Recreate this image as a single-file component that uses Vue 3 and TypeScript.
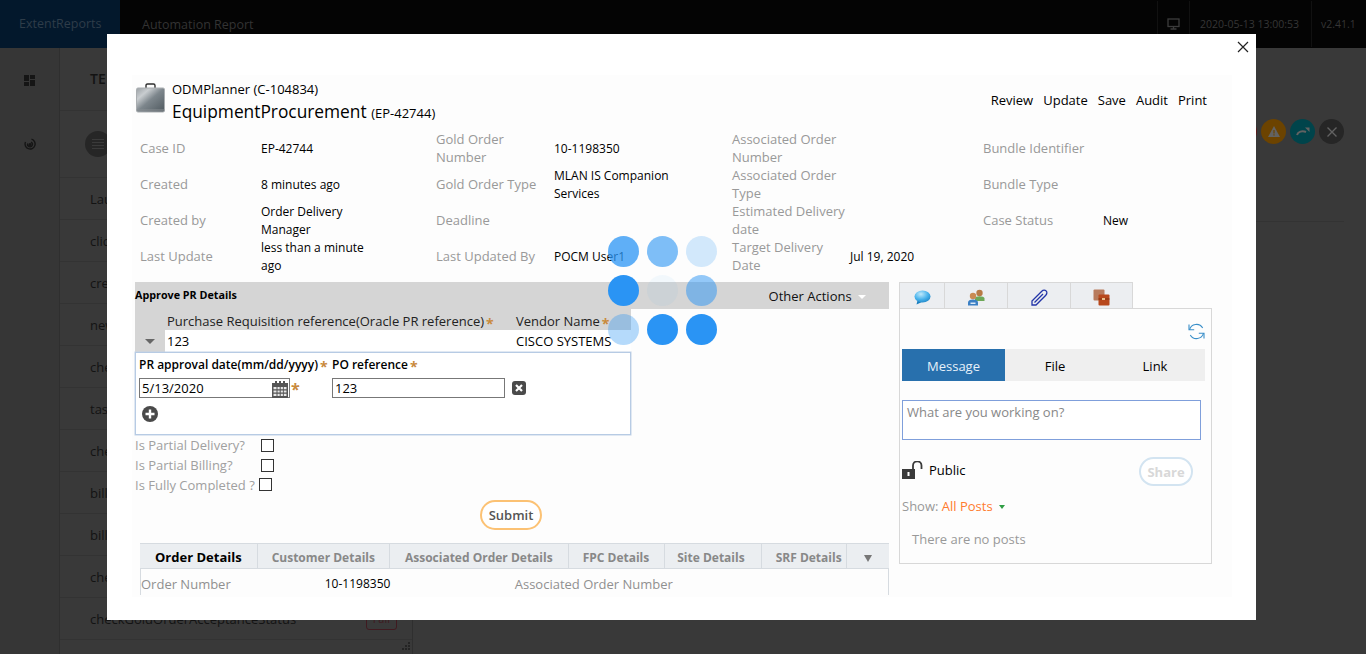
<script setup lang="ts">
interface InfoCell {
  label: string
  value?: string
}

const sideRows = ['clic', 'cre', 'new', 'che', 'tas', 'che', 'bill', 'bill', 'che']

const infoRows: InfoCell[][] = [
  [
    { label: 'Case ID', value: 'EP-42744' },
    { label: 'Gold Order Number', value: '10-1198350' },
    { label: 'Associated Order Number' },
    { label: 'Bundle Identifier' }
  ],
  [
    { label: 'Created', value: '8 minutes ago' },
    { label: 'Gold Order Type', value: 'MLAN IS Companion Services' },
    { label: 'Associated Order Type' },
    { label: 'Bundle Type' }
  ],
  [
    { label: 'Created by', value: 'Order Delivery Manager' },
    { label: 'Deadline' },
    { label: 'Estimated Delivery date' },
    { label: 'Case Status', value: 'New' }
  ],
  [
    { label: 'Last Update', value: 'less than a minute ago' },
    { label: 'Last Updated By', value: 'POCM User1' },
    { label: 'Target Delivery Date', value: 'Jul 19, 2020' },
    { label: '' }
  ]
]

const actions = ['Review', 'Update', 'Save', 'Audit', 'Print']
const checks = ['Is Partial Delivery?', 'Is Partial Billing?', 'Is Fully Completed ?']
const detailTabs = ['Customer Details', 'Associated Order Details', 'FPC Details', 'Site Details', 'SRF Details']
const spinnerDots = [0.75, 0.6, 0.2, 1, 0.05, 0.5, 0.35, 1, 1]
</script>

<template>
  <div class="page">
    <header class="topbar">
      <div class="brand">ExtentReports</div>
      <div class="report-name">Automation Report</div>
      <div class="top-cell top-icon">
        <svg width="13" height="12" viewBox="0 0 13 12" fill="none" stroke="#3c3c3c" stroke-width="1.3">
          <rect x="1" y="1" width="11" height="7.5" />
          <path d="M6.5 8.500v2.500M3.500 11h6" />
        </svg>
      </div>
      <div class="top-cell top-date">2020-05-13 13:00:53</div>
      <div class="top-cell top-version">v2.41.1</div>
    </header>

    <div class="backdrop-body">
      <aside class="sidebar">
        <div class="side-icon">
          <svg width="11" height="11" viewBox="0 0 11 11" fill="#151515">
            <path d="M0 0h5v6H0zM6 0h5v4H6zM6 5h5v6H6zM0 7h5v4H0z" />
          </svg>
        </div>
        <div class="side-icon">
          <svg width="12" height="12" viewBox="0 0 12 12" fill="none" stroke="#151515" stroke-width="1.4">
            <path d="M7.500 1.200A5 5 0 1 1 1.500 4" />
            <path d="M7 4.200A2.400 2.400 0 1 1 3.800 5.500" />
            <circle cx="6" cy="6.500" r="0.8" fill="#151515" />
          </svg>
        </div>
      </aside>
      <section class="test-list">
        <div class="list-head">TE</div>
        <div class="list-tools"><span class="tool-dot"></span></div>
        <div class="list-row">Lau</div>
        <div v-for="(row, i) in sideRows" :key="i" class="list-row">{{ row }}</div>
        <div class="list-row">
          checkGoldOrderAcceptanceStatus
          <span class="fail">Fail</span>
        </div>
        <svg class="grip" width="8" height="8" viewBox="0 0 8 8" fill="#242424">
          <path d="M6 0h2v2H6zM3 3h2v2H3zM6 3h2v2H6zM0 6h2v2H0zM3 6h2v2H3zM6 6h2v2H6z" />
        </svg>
      </section>
      <section class="test-detail">
        <div class="status-dots">
          <span class="status status--error"></span>
          <span class="status status--warn">
            <svg width="12" height="11" viewBox="0 0 12 11">
              <path d="M6 0l6 11H0z" fill="#626262" />
              <path d="M5.400 4h1.200v3.500H5.400zM5.400 8.300h1.200v1.200H5.400z" fill="#6c4300" />
            </svg>
          </span>
          <span class="status status--skip">
            <svg width="14" height="9" viewBox="0 0 14 9" fill="none" stroke="#626262" stroke-width="2">
              <path d="M1 8c1-3 5-5 9-3" />
              <path d="M9 0.500h4.500v4.500z" fill="#626262" stroke="none" />
            </svg>
          </span>
          <span class="status status--fail">
            <svg width="10" height="10" viewBox="0 0 10 10" stroke="#626262" stroke-width="1.4">
              <path d="M0.500 0.500l9 9M9.500 0.500l-9 9" />
            </svg>
          </span>
        </div>
        <div class="detail-rule"></div>
      </section>
    </div>

    <!-- modal sits over the dimmed report -->
    <div class="modal">
      <button class="modal-close" type="button" aria-label="Close">
        <svg width="12" height="12" viewBox="0 0 12 12" stroke="#222" stroke-width="1.2">
          <path d="M1 1l10 10M11 1L1 11" />
        </svg>
      </button>

      <div class="case-panel">
        <div class="case-head">
          <svg class="case-icon" width="29" height="30" viewBox="0 0 29 30">
            <defs>
              <linearGradient id="caseFill" x1="0" y1="0" x2="1" y2="1">
                <stop offset="0" stop-color="#9aa0a4" />
                <stop offset="0.25" stop-color="#c9cdd0" />
                <stop offset="0.5" stop-color="#7d868c" />
                <stop offset="1" stop-color="#4e585e" />
              </linearGradient>
            </defs>
            <path d="M10 5V2.500C10 1.500 10.700 1 11.500 1h6c.8 0 1.500.5 1.500 1.500V5" fill="none" stroke="#2e2e2e" stroke-width="1.4" />
            <rect x="0.500" y="5" width="28" height="24" rx="1.5" fill="url(#caseFill)" stroke="#a9adb0" />
            <path d="M0.500 27h28" stroke="#8b9094" />
          </svg>
          <div class="case-titles">
            <div class="case-parent">ODMPlanner (C-104834)</div>
            <div class="case-name">EquipmentProcurement <small>(EP-42744)</small></div>
          </div>
          <nav class="case-actions">
            <span v-for="action in actions" :key="action">{{ action }}</span>
          </nav>
        </div>

        <div class="info-grid">
          <template v-for="(row, r) in infoRows" :key="r">
            <template v-for="(cell, c) in row" :key="c">
              <div class="info-label">{{ cell.label }}</div>
              <div class="info-value">{{ cell.value }}</div>
            </template>
          </template>
        </div>

        <div class="work-area">
          <div class="work-main">
            <div class="action-bar">
              <strong>Approve PR Details</strong>
              <span class="other-actions">Other Actions <i class="caret-white"></i></span>
            </div>

            <div class="pr-head">
              <span class="pr-head-ref">Purchase Requisition reference(Oracle PR reference)<b class="req">*</b></span>
              <span>Vendor Name<b class="req">*</b></span>
            </div>
            <div class="pr-values">
              <span class="pr-toggle"><i class="caret-grey"></i></span>
              <span class="pr-value-ref">123</span>
              <span>CISCO SYSTEMS</span>
            </div>

            <div class="approval-box">
              <div class="approval-labels">
                <span class="approval-date-label">PR approval date(mm/dd/yyyy)<b class="req">*</b></span>
                <span>PO reference<b class="req">*</b></span>
              </div>
              <div class="approval-inputs">
                <div class="date-input">
                  5/13/2020
                  <svg class="calendar" width="16" height="17" viewBox="0 0 16 17">
                    <path d="M0 2h16v15H0z" fill="#555" />
                    <path d="M3 0h2v4H3zM7 0h2v4H7zM11 0h2v4h-2z" fill="#555" />
                    <path d="M1.500 6h3v2.200h-3zM5.500 6h2.200v2.200H5.500zM8.700 6h2.200v2.200H8.700zM11.800 6h2.700v2.200h-2.700zM1.500 9.400h3v2.200h-3zM5.500 9.400h2.200v2.200H5.500zM8.700 9.400h2.200v2.200H8.700zM11.800 9.400h2.700v2.200h-2.700zM1.500 12.800h3V15h-3zM5.500 12.800h2.200V15H5.500zM8.700 12.800h2.200V15H8.700zM11.800 12.800h2.700V15h-2.700z" fill="#e8e8e8" />
                  </svg>
                </div>
                <span class="date-req"><b class="req">*</b></span>
                <div class="po-input">123</div>
                <span class="remove-row">
                  <svg width="14" height="14" viewBox="0 0 14 14">
                    <rect width="14" height="14" rx="3" fill="#4a4a4a" />
                    <path d="M4 4l6 6M10 4l-6 6" stroke="#fff" stroke-width="2.2" />
                  </svg>
                </span>
              </div>
              <svg class="add-row" width="16" height="16" viewBox="0 0 16 16">
                <circle cx="8" cy="8" r="8" fill="#4a4a4a" />
                <path d="M8 3.500v9M3.500 8h9" stroke="#fff" stroke-width="2.4" />
              </svg>
            </div>

            <div class="check-list">
              <label v-for="(check, i) in checks" :key="check" class="check-row" :class="{ 'check-row--tight': i === 2 }">
                <span class="check-label">{{ check }}</span>
                <span class="check-box"></span>
              </label>
            </div>

            <div class="submit-wrap">
              <button class="submit" type="button">Submit</button>
            </div>

            <div class="details">
              <div class="detail-tabs">
                <span class="detail-tab detail-tab--active">Order Details</span>
                <span v-for="tab in detailTabs" :key="tab" class="detail-tab">{{ tab }}</span>
                <span class="detail-tab detail-tab--more"><i class="caret-more"></i></span>
              </div>
              <div class="detail-row">
                <span class="detail-label">Order Number</span>
                <span class="detail-value">10-1198350</span>
                <span class="detail-label">Associated Order Number</span>
              </div>
            </div>
          </div>

          <aside class="social">
            <div class="social-tabs">
              <span class="social-tab">
                <svg width="17" height="15" viewBox="0 0 17 15">
                  <defs>
                    <radialGradient id="bubbleFill" cx="0.4" cy="0.3" r="0.8">
                      <stop offset="0" stop-color="#bfe9fb" />
                      <stop offset="0.55" stop-color="#49b3ec" />
                      <stop offset="1" stop-color="#1a7fc0" />
                    </radialGradient>
                  </defs>
                  <path d="M3.500 10.500L2.500 14.500l5.500-2.500z" fill="#1a7fc0" />
                  <ellipse cx="8.500" cy="6.500" rx="8" ry="6" fill="url(#bubbleFill)" />
                </svg>
              </span>
              <span class="social-tab">
                <svg width="17" height="17" viewBox="0 0 17 17">
                  <circle cx="11.500" cy="4" r="3.200" fill="#b77a45" />
                  <path d="M7 12V9.500C7 8 9 7.300 11.500 7.300S16.500 8 16.500 9.500V12z" fill="#6da858" />
                  <circle cx="5" cy="7" r="3.200" fill="#c98a52" />
                  <path d="M0 16.500v-3C0 11.800 2 10.500 5 10.500s5 1.300 5 3v3z" fill="#3a7fc4" />
                  <path d="M2.500 13.500h5v1.500h-5z" fill="#dbe9f6" />
                </svg>
              </span>
              <span class="social-tab">
                <svg width="17" height="17" viewBox="0 0 17 17" fill="none" stroke="#2335a8" stroke-width="1.3">
                  <path d="M1 12L10.800 2.200c1.400-1.400 3.300-1.300 4.300-.3s1.100 2.900-.3 4.300L5 16H1z" />
                  <path d="M3.500 13.500L12 5" />
                </svg>
              </span>
              <span class="social-tab">
                <svg width="17" height="17" viewBox="0 0 17 17">
                  <rect x="0.500" y="0.500" width="11" height="11" rx="1" fill="#b87b5d" />
                  <rect x="5.500" y="5.500" width="11" height="11" rx="1" fill="#b8481c" />
                  <path d="M5.500 10h11" stroke="#7e300f" />
                  <rect x="9" y="9" width="3" height="2" fill="#e9c08b" />
                </svg>
              </span>
            </div>
            <div class="social-body">
              <div class="refresh-row">
                <svg width="17" height="17" viewBox="0 0 17 17" fill="none" stroke="#3a8fc9" stroke-width="1.1">
                  <path d="M1.500 6.800A7.200 7.200 0 0 1 14.700 5" />
                  <path d="M15.500 10.200A7.200 7.200 0 0 1 2.300 12" />
                  <path d="M1 1.500v5.300h5.200M16 15.500v-5.300h-5.200" />
                </svg>
              </div>
              <div class="post-tabs">
                <span class="post-tab post-tab--active">Message</span>
                <span class="post-tab">File</span>
                <span class="post-tab">Link</span>
              </div>
              <div class="post-input">What are you working on?</div>
              <div class="share-row">
                <svg width="21" height="18" viewBox="0 0 21 18">
                  <rect x="0" y="8" width="13" height="10" fill="#3a3a3a" />
                  <path d="M11 8V4.500a4 4 0 0 1 8.500 0V8" fill="none" stroke="#3a3a3a" stroke-width="1.8" />
                  <rect x="5.500" y="11" width="2" height="4" fill="#fff" />
                </svg>
                <span class="share-public">Public</span>
                <button class="share" type="button">Share</button>
              </div>
              <div class="show-row">
                <span>Show:</span> <span class="show-value">All Posts</span><i class="caret-green"></i>
              </div>
              <div class="no-posts">There are no posts</div>
            </div>
          </aside>
        </div>
      </div>
    </div>

    <!-- loading spinner on top of the modal -->
    <div class="spinner">
      <span
        v-for="(opacity, i) in spinnerDots"
        :key="i"
        class="spinner-dot"
        :style="{ opacity }"
      ></span>
    </div>
  </div>
</template>

<style scoped>
.page {
  position: relative;
  width: 1366px;
  height: 654px;
  overflow: hidden;
  background: #393939;
  font-family: "Open Sans", "Liberation Sans", sans-serif;
  font-size: 12px;
  color: #000;
}

/* dimmed report */
.topbar {
  display: flex;
  align-items: center;
  height: 48px;
  background: #040404;
  color: #333;
  font-size: 12.5px;
}

.brand {
  width: 120px;
  height: 48px;
  line-height: 48px;
  padding-left: 19px;
  box-sizing: border-box;
  background: #03182c;
  color: #2e3c49;
}

.report-name {
  flex: 1;
  padding-left: 22px;
}

.top-cell {
  display: flex;
  align-items: center;
  height: 46px;
  box-sizing: border-box;
  border-left: 1px solid #111;
  font-size: 10.5px;
  color: #363636;
}

.top-icon {
  justify-content: center;
  width: 32px;
}

.top-date {
  width: 122px;
  padding-left: 10px;
}

.top-version {
  width: 55px;
  padding-left: 9px;
}

.backdrop-body {
  display: flex;
  height: 606px;
}

.sidebar {
  width: 59px;
  border-right: 1px solid #2f2f2f;
  background: #363636;
}

.side-icon {
  display: flex;
  align-items: center;
  justify-content: center;
  height: 64px;
}

.test-list {
  position: relative;
  width: 352px;
  border-right: 1px solid #2f2f2f;
  color: #131313;
  font-size: 13px;
}

.list-head {
  height: 62px;
  line-height: 62px;
  padding-left: 30px;
  font-size: 14px;
  font-weight: 600;
  border-bottom: 1px solid #333;
}

.list-tools {
  display: flex;
  align-items: center;
  height: 66px;
  padding-left: 25px;
  border-bottom: 1px solid #333;
}

.tool-dot {
  width: 26px;
  height: 26px;
  border-radius: 50%;
  background: repeating-linear-gradient(#3a3a3a 0 1px, #262626 1px 3px) center / 12px 11px no-repeat, #262626;
}

.list-row {
  display: flex;
  justify-content: space-between;
  align-items: center;
  height: 41px;
  padding: 0 15px 0 30px;
  border-bottom: 1px solid #333;
}

.fail {
  padding: 3px 6px;
  border: 1px solid #401a20;
  border-radius: 3px;
  color: #401a20;
  font-size: 11px;
}

.grip {
  position: absolute;
  right: 2px;
  bottom: 4px;
}

.test-detail {
  flex: 1;
  padding: 71px 22px 0 0;
}

.status-dots {
  display: flex;
  justify-content: flex-end;
  gap: 4px;
}

.status {
  display: flex;
  align-items: center;
  justify-content: center;
  width: 25px;
  height: 25px;
  border-radius: 50%;
}

.status--error {
  background: #5c1a1a;
}

.status--warn {
  background: #6c4300;
}

.status--skip {
  background: #00444b;
}

.status--fail {
  background: #262626;
}

.detail-rule {
  height: 1px;
  margin-top: 77px;
  background: #333;
}

/* modal */
.modal {
  position: absolute;
  left: 107px;
  top: 34px;
  width: 1149px;
  height: 586px;
  background: #fff;
  overflow: hidden;
}

.modal-close {
  position: absolute;
  top: 7px;
  right: 7px;
  display: flex;
  padding: 0;
  border: 0;
  background: none;
}

.case-panel {
  width: 1100px;
  height: 522px;
  margin: 41px 0 0 25px;
  padding: 0 0 0 3px;
  box-sizing: border-box;
  background: #fdfdfd;
  overflow: hidden;
}

.case-head {
  display: flex;
  align-items: flex-start;
  height: 51px;
  padding-top: 4px;
}

.case-icon {
  margin: 4px 7px 0 1px;
}

.case-parent {
  font-size: 13px;
  line-height: 20px;
}

.case-name {
  font-size: 17.33px;
  line-height: 24px;
}

.case-name small {
  font-size: 13px;
}

.case-actions {
  display: flex;
  gap: 10px;
  margin: 12px 25px 0 auto;
  font-size: 13px;
}

.info-grid {
  display: grid;
  grid-template-columns: 121px 175px 118px 178px 118px 133px 120px 1fr;
  grid-auto-rows: 36px;
  padding-left: 5px;
}

.info-label,
.info-value {
  display: flex;
  align-items: center;
  line-height: 18px;
}

.info-label {
  padding-right: 2px;
  color: #999;
  font-size: 13px;
}

.info-value {
  max-width: 122px;
  padding-top: 1px;
}

.work-area {
  display: flex;
  gap: 10px;
  margin-top: 8px;
}

.work-main {
  width: 754px;
  flex: none;
}

.action-bar {
  display: flex;
  align-items: center;
  justify-content: space-between;
  height: 27px;
  padding-right: 23px;
  background: #d5d5d5;
  font-size: 10.75px;
}

.action-bar strong {
  margin-bottom: 1px;
}

.other-actions {
  font-size: 13px;
  color: #111;
}

.caret-white {
  display: inline-block;
  margin: 0 0 2px 3px;
  border: 4px solid transparent;
  border-top: 4px solid #fff;
  border-bottom: 0;
}

.pr-head {
  display: flex;
  height: 21px;
  width: 496px;
  box-sizing: border-box;
  padding-left: 32px;
  background: #d5d5d5;
  font-size: 13px;
  line-height: 24px;
  color: #222;
}

.pr-head-ref {
  width: 349px;
  white-space: nowrap;
}

.pr-values {
  display: flex;
  align-items: center;
  width: 496px;
  height: 22px;
  font-size: 13px;
  background: linear-gradient(to right, #d5d5d5 30px, #fff 30px);
}

.pr-toggle {
  display: flex;
  align-items: center;
  justify-content: center;
  width: 30px;
  height: 100%;
}

.pr-value-ref {
  width: 349px;
  padding-left: 2px;
}

.caret-grey {
  border: 5px solid transparent;
  border-top: 5px solid #666;
  border-bottom: 0;
}

.req {
  margin-left: 2px;
  color: #c98a3c;
  font-size: 14px;
  font-weight: 700;
  line-height: 1;
  vertical-align: -3px;
}

.approval-box {
  width: 496px;
  height: 83px;
  box-sizing: border-box;
  padding: 4px 3px 0;
  background: #fff;
  border: 1px solid #b7cbe4;
  box-shadow: 0 0 0 0.5px #c3d4e8;
}

.approval-labels {
  display: flex;
  font-size: 12px;
  font-weight: 600;
  line-height: 16px;
  white-space: nowrap;
}

.approval-date-label {
  width: 193px;
}

.approval-inputs {
  display: flex;
  align-items: center;
  margin-top: 4px;
  height: 20px;
}

.date-input,
.po-input {
  height: 20px;
  box-sizing: border-box;
  border: 1px solid #777;
  padding-left: 2px;
  font-size: 13px;
  line-height: 18px;
}

.date-input {
  position: relative;
  width: 151px;
}

.calendar {
  position: absolute;
  right: 1px;
  top: 2px;
  background: #fff;
}

.date-req {
  width: 42px;
}

.date-req .req {
  margin-left: 1px;
  font-size: 16px;
}

.po-input {
  width: 173px;
}

.remove-row {
  display: flex;
  margin-left: 7px;
}

.add-row {
  display: block;
  margin: 8px 0 0 3px;
}

.check-list {
  color: #a0a0a0;
  font-size: 13px;
}

.check-row {
  display: flex;
  align-items: center;
  height: 20px;
}

.check-row--tight {
  height: 19px;
}

.check-label {
  width: 126px;
}

.check-row--tight .check-label {
  width: 124px;
}

.check-box {
  width: 11px;
  height: 11px;
  border: 1px solid #333;
  background: #fff;
}

.submit-wrap {
  display: flex;
  justify-content: center;
  padding: 6px 2px 0 0;
}

.submit {
  width: 62px;
  height: 30px;
  border: 2px solid #fcc274;
  border-radius: 15px;
  background: #fff;
  color: #555;
  font-family: inherit;
  font-size: 13px;
  font-weight: 600;
  padding: 0;
}

.details {
  margin: 13px 0 0 5px;
}

.detail-tabs {
  display: flex;
  height: 24px;
  border-top: 1px solid #d6dbe0;
  border-bottom: 1px solid #d6dbe0;
  background: #ebeef1;
}

.detail-tab {
  display: flex;
  align-items: center;
  padding: 2px 14px 0;
  border-right: 1px solid #d6dbe0;
  color: #888;
  font-size: 12px;
  font-weight: 700;
  white-space: nowrap;
}

.detail-tab--active {
  padding: 2px 15px 0;
  color: #000;
  font-size: 13px;
}

.detail-tab:nth-child(3) {
  padding: 2px 15px 0;
}

.detail-tab:nth-child(4) {
  padding-right: 15px;
}

.detail-tab:nth-child(5) {
  padding: 2px 16px 0 12px;
}

.detail-tab:nth-child(6) {
  padding-right: 4px;
}

.detail-tab--more {
  flex: 1;
  justify-content: center;
  padding: 4px 0 0;
  border-right: 0;
}

.caret-more {
  border: 4px solid transparent;
  border-top: 7px solid #777;
  border-bottom: 0;
}

.detail-row {
  display: flex;
  align-items: center;
  height: 26px;
  box-sizing: border-box;
  padding-top: 3px;
  border-left: 1px solid #d6dbe0;
  border-right: 1px solid #d6dbe0;
  font-size: 13px;
}

.detail-label {
  color: #909090;
}

.detail-value {
  width: 190px;
  margin-left: 94px;
  font-size: 12px;
}

/* activity panel */
.social {
  width: 313px;
  flex: none;
}

.social-tabs {
  display: flex;
  height: 26px;
}

.social-tab {
  display: flex;
  align-items: center;
  justify-content: center;
  width: 46px;
  box-sizing: border-box;
  padding-top: 3px;
  border: 1px solid #d8d8d8;
  border-bottom: 0;
  border-left: 0;
  background: #eceef1;
}

.social-tab:first-child {
  border-left: 1px solid #d8d8d8;
}

.social-tab:nth-child(2),
.social-tab:nth-child(3) {
  width: 63px;
}

.social-tab:nth-child(4) {
  width: 62px;
}

.social-body {
  height: 256px;
  box-sizing: border-box;
  border: 1px solid #d8d8d8;
  padding: 0 6px 0 2px;
  background: #fdfdfd;
}

.refresh-row {
  display: flex;
  justify-content: flex-end;
  height: 40px;
  box-sizing: border-box;
  padding-top: 14px;
}

.post-tabs {
  display: flex;
  height: 32px;
  background: #efefef;
  font-size: 13px;
}

.post-tab {
  display: flex;
  align-items: center;
  justify-content: center;
  width: 100px;
  padding-top: 1px;
  box-sizing: border-box;
}

.post-tab--active {
  width: 103px;
  background: #2870ad;
  color: #e6f1fa;
}

.post-input {
  width: 299px;
  height: 40px;
  box-sizing: border-box;
  margin-top: 19px;
  padding: 2px 4px;
  border: 1px solid #7f9fdb;
  background: #fff;
  color: #888;
  font-size: 13px;
}

.share-row {
  display: flex;
  align-items: center;
  height: 30px;
  margin-top: 15px;
}

.share-public {
  margin-left: 6px;
  font-size: 13px;
}

.share {
  align-self: flex-start;
  width: 54px;
  height: 29px;
  margin: 2px 12px 0 auto;
  padding: 0;
  border: 2px solid #d3e4f1;
  border-radius: 15px;
  background: #fff;
  color: #d8d8d8;
  font-family: inherit;
  font-size: 13px;
  font-weight: 700;
}

.show-row {
  margin-top: 11px;
  color: #999;
  font-size: 13px;
  line-height: 20px;
}

.show-value {
  color: #ff7b2e;
}

.caret-green {
  display: inline-block;
  margin: 0 0 2px 6px;
  border: 3px solid transparent;
  border-top: 4px solid #2f9e44;
  border-bottom: 0;
}

.no-posts {
  margin: 14px 0 0 10px;
  color: #999;
  font-size: 13px;
}

/* spinner */
.spinner {
  position: absolute;
  left: 608px;
  top: 236px;
  display: grid;
  grid-template-columns: repeat(3, 31px);
  gap: 8px;
}

.spinner-dot {
  width: 31px;
  height: 31px;
  border-radius: 50%;
  background: #2a94f4;
}
</style>
